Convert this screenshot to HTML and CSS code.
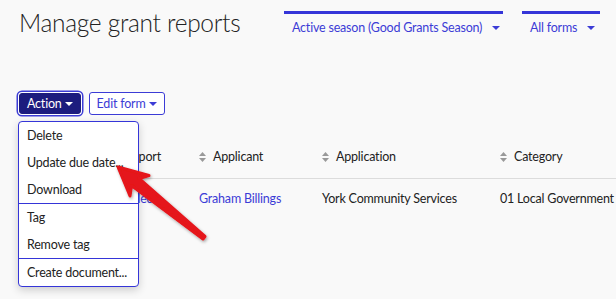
FILE: index.html
```html
<!DOCTYPE html>
<html>
<head>
<meta charset="utf-8">
<link rel="stylesheet" href="styles.css">
</head>
<body>
<div class="page">
  <header class="header">
    <h1 class="title">Manage grant reports</h1>
    <div class="filters">
      <div class="filter filter-season">Active season (Good Grants Season)<span class="caret"></span></div>
      <div class="filter filter-forms">All forms<span class="caret"></span></div>
    </div>
  </header>

  <div class="actions">
    <button class="btn btn-primary">Action<span class="caret caret-white"></span></button>
    <button class="btn btn-outline">Edit form<span class="caret"></span></button>
  </div>

  <table class="grid">
    <thead>
      <tr>
        <th class="col0"></th>
        <th class="col1"><svg class="sort" width="7" height="10" viewBox="0 0 7 10"><polygon points="0,4 3.5,0 7,4"/><polygon points="0,6 7,6 3.5,10"/></svg>Report</th>
        <th class="col2"><svg class="sort" width="7" height="10" viewBox="0 0 7 10"><polygon points="0,4 3.5,0 7,4"/><polygon points="0,6 7,6 3.5,10"/></svg>Applicant</th>
        <th class="col3"><svg class="sort" width="7" height="10" viewBox="0 0 7 10"><polygon points="0,4 3.5,0 7,4"/><polygon points="0,6 7,6 3.5,10"/></svg>Application</th>
        <th class="col4"><svg class="sort" width="7" height="10" viewBox="0 0 7 10"><polygon points="0,4 3.5,0 7,4"/><polygon points="0,6 7,6 3.5,10"/></svg>Category</th>
      </tr>
    </thead>
    <tbody>
      <tr>
        <td class="col0"></td>
        <td class="col1"><a class="link">Enabled</a></td>
        <td class="col2"><a class="link">Graham Billings</a></td>
        <td class="col3">York Community Services</td>
        <td class="col4">01 Local Government</td>
      </tr>
    </tbody>
  </table>

  <ul class="menu">
    <li class="item">Delete</li>
    <li class="item">Update due date...</li>
    <li class="item item-sep">Download</li>
    <li class="item">Tag</li>
    <li class="item item-sep">Remove tag</li>
    <li class="item">Create document...</li>
  </ul>

  <svg class="arrow" width="616" height="299" viewBox="0 0 616 299">
    <defs>
      <filter id="sh" x="-20%" y="-20%" width="140%" height="140%">
        <feDropShadow dx="1" dy="1.5" stdDeviation="1.5" flood-color="#000" flood-opacity="0.35"/>
      </filter>
    </defs>
    <polygon points="118,167 149,175.5 139,178.5 205,236.5 203,239 131.5,185.5 130,196"
      fill="#e5141a" stroke="#e5141a" stroke-width="3" stroke-linejoin="round" filter="url(#sh)"/>
  </svg>
</div>
</body>
</html>
```

FILE: styles.css
```css
html, body {
  margin: 0;
  padding: 0;
}
body {
  background: #f9f9f9;
  font-family: "Lato", "Noto Sans", sans-serif;
  font-size: 12.5px;
  letter-spacing: -0.2px;
  color: #222;
  overflow: hidden;
  width: 616px;
  height: 299px;
}
.page {
  position: relative;
  width: 616px;
  height: 299px;
  overflow: hidden;
}
.header {
  display: flex;
  justify-content: space-between;
  align-items: flex-start;
  padding: 0 16px 0 19px;
}
.title {
  margin: 5px 0 0 0;
  font-size: 24.5px;
  font-weight: 300;
  letter-spacing: -0.3px;
  color: #222;
  line-height: 36px;
  white-space: nowrap;
}
.filters {
  display: flex;
  gap: 19px;
  margin-top: 11px;
  flex-shrink: 0;
}
.filter {
  box-sizing: border-box;
  border-top: 3px solid #3535d8;
  color: #3c3cd6;
  padding: 5px 0 0 8px;
  line-height: 18px;
  white-space: nowrap;
  flex-shrink: 0;
}
.filter-season { width: 219px; }
.filter-forms { width: 78px; }
.caret {
  display: inline-block;
  width: 0;
  height: 0;
  border-left: 4px solid transparent;
  border-right: 4px solid transparent;
  border-top: 4.5px solid #3c3cd6;
  vertical-align: middle;
  margin-left: 3px;
  margin-top: -2px;
}
.caret-white { border-top-color: #fff; }
.filter .caret { margin-left: 10px; }

.actions {
  display: flex;
  gap: 8px;
  align-items: center;
  padding-left: 19px;
  margin-top: 51px;
}
.btn {
  font-family: inherit;
  font-size: 12.5px;
  letter-spacing: -0.2px;
  line-height: 17px;
  border-radius: 3px;
  cursor: pointer;
  box-sizing: border-box;
  white-space: nowrap;
}
.btn-primary {
  background: #1c1c7e;
  color: #fff;
  border: 1px solid #1c1c7e;
  padding: 0 7px;
  box-shadow: 0 0 0 1px #fff, 0 0 0 2.5px #3c3cd6;
  height: 21px;
}
.btn-outline {
  background: #fff;
  color: #3c3cd6;
  border: 1px solid #3c3cd6;
  padding: 0 7px;
  height: 23px;
}

.grid {
  border-collapse: collapse;
  margin-top: 21px;
  margin-left: 18px;
  width: 635px;
  table-layout: fixed;
}
.grid th, .grid td {
  box-sizing: border-box;
  text-align: left;
  font-weight: 400;
  padding: 0 0 0 7px;
  white-space: nowrap;
  overflow: hidden;
}
.grid th {
  height: 42px;
  border-bottom: 1px solid #dcdcdc;
}
.grid td {
  height: 40px;
}
.col0 { width: 86px; }
.col1 { width: 88px; }
.col2 { width: 123px; }
.col3 { width: 178px; }
.col4 { width: 160px; }
.sort {
  display: inline-block;
  margin-right: 7px;
  vertical-align: -1px;
  fill: #999;
}
.link {
  color: #3c3cd6;
  text-decoration: none;
}

.menu {
  position: absolute;
  left: 18px;
  top: 121px;
  width: 119px;
  margin: 0;
  padding: 0;
  list-style: none;
  background: #fff;
  border: 1px solid #3535d8;
  border-radius: 4px;
  box-shadow: 0 3px 8px rgba(0,0,0,0.18);
}
.item {
  padding: 0 8px;
  height: 27px;
  line-height: 27px;
  color: #222;
  white-space: nowrap;
}
.item-sep {
  border-bottom: 1px solid #3535d8;
}
.arrow {
  position: absolute;
  left: 0;
  top: 0;
  pointer-events: none;
}
```
